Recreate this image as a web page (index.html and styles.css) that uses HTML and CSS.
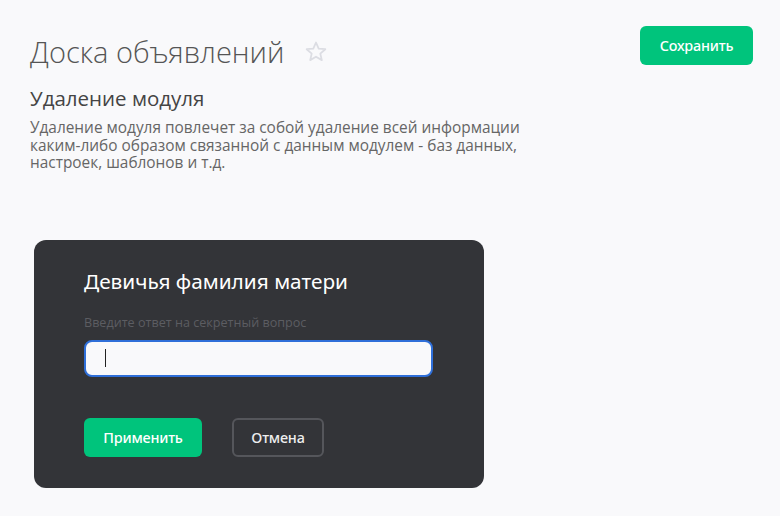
FILE: index.html
```html
<!DOCTYPE html>
<html lang="ru">
<head>
    <meta charset="UTF-8">
    <meta name="viewport" content="width=device-width, initial-scale=1.0">
    <title>Доска объявлений</title>
    <link rel="stylesheet" href="styles.css">
</head>
<body>

<div class="page">
    <div class="page-head">
        <h1 class="page-title">Доска объявлений
            <svg class="star" width="22" height="21" viewBox="0 0 22 21">
                <path d="M11 1.5l2.7 6.1 6.6.6-5 4.4 1.5 6.5L11 15.7l-5.8 3.4 1.5-6.5-5-4.4 6.6-.6z" fill="none" stroke="#dcdde3" stroke-width="1.8" stroke-linejoin="round"/>
            </svg>
        </h1>
        <button class="btn btn-green btn-save">Сохранить</button>
    </div>

    <h2 class="section-title">Удаление модуля</h2>
    <p class="section-text">Удаление модуля повлечет за собой удаление всей информации каким-либо образом связанной с данным модулем - баз данных, настроек, шаблонов и т.д.</p>

    <!-- диалог секретного вопроса -->
    <div class="dialog">
        <h3 class="dialog-title">Девичья фамилия матери</h3>
        <label class="dialog-label" for="answer">Введите ответ на секретный вопрос</label>
        <div class="input-box"><span class="caret"></span></div>
        <div class="dialog-actions">
            <button class="btn btn-green">Применить</button>
            <button class="btn btn-outline">Отмена</button>
        </div>
    </div>
</div>

</body>
</html>
```

FILE: styles.css
```css
body {
    margin: 0;
    background-color: #f9f9fb;
    font-family: "Open Sans", "Noto Sans", sans-serif;
}

.page {
    padding: 26px 26px 0 30px;
}

.page-head {
    display: flex;
    justify-content: space-between;
    align-items: flex-start;
}

.page-title {
    margin: 6px 0 0;
    font-size: 29px;
    font-weight: 300;
    color: #555;
    line-height: 40px;
    display: flex;
    align-items: center;
}

.star {
    margin-left: 21px;
    margin-top: -2px;
}

.btn {
    font-family: "Noto Sans", sans-serif;
    font-size: 14.4px;
    font-weight: 500;
    border-radius: 6px;
    height: 39px;
    cursor: pointer;
    letter-spacing: -0.2px;
}

.btn-green {
    background-color: #00c47c;
    color: white;
    border: none;
    padding: 0 18px;
}

.btn-save {
    width: 113px;
    margin-right: 1px;
}

.section-title {
    margin: 12px 0 0;
    font-size: 20.5px;
    font-weight: 400;
    color: #444;
    line-height: 28px;
}

.section-text {
    margin: 7px 0 0;
    width: 500px;
    font-size: 15.4px;
    line-height: 17.5px;
    color: #666;
}

.dialog {
    margin: 68px 0 0 4px;
    width: 400px;
    height: 248px;
    padding: 0 0 0 50px;
    background-color: #333438;
    border-radius: 12px;
    overflow: hidden;
}

.dialog-title {
    margin: 0;
    padding-top: 26px;
    font-family: "Noto Sans", sans-serif;
    font-size: 20.8px;
    font-weight: 400;
    color: #fff;
    line-height: 30px;
}

.dialog-label {
    display: block;
    margin-top: 18px;
    font-size: 12.6px;
    color: #5c5d62;
}

.input-box {
    margin-top: 9px;
    width: 349px;
    height: 37px;
    border: 2px solid #2f6fd9;
    border-radius: 8px;
    background-color: #f9f9fb;
    box-sizing: border-box;
    display: flex;
    align-items: center;
}

.caret {
    display: block;
    width: 1px;
    height: 18px;
    background-color: #222;
    margin-left: 19px;
}

.dialog-actions {
    display: flex;
    gap: 30px;
    margin-top: 41px;
}

.dialog-actions .btn-green {
    width: 118px;
}

.btn-outline {
    width: 92px;
    background: transparent;
    border: 2px solid #55565b;
    color: #eee;
}
```
